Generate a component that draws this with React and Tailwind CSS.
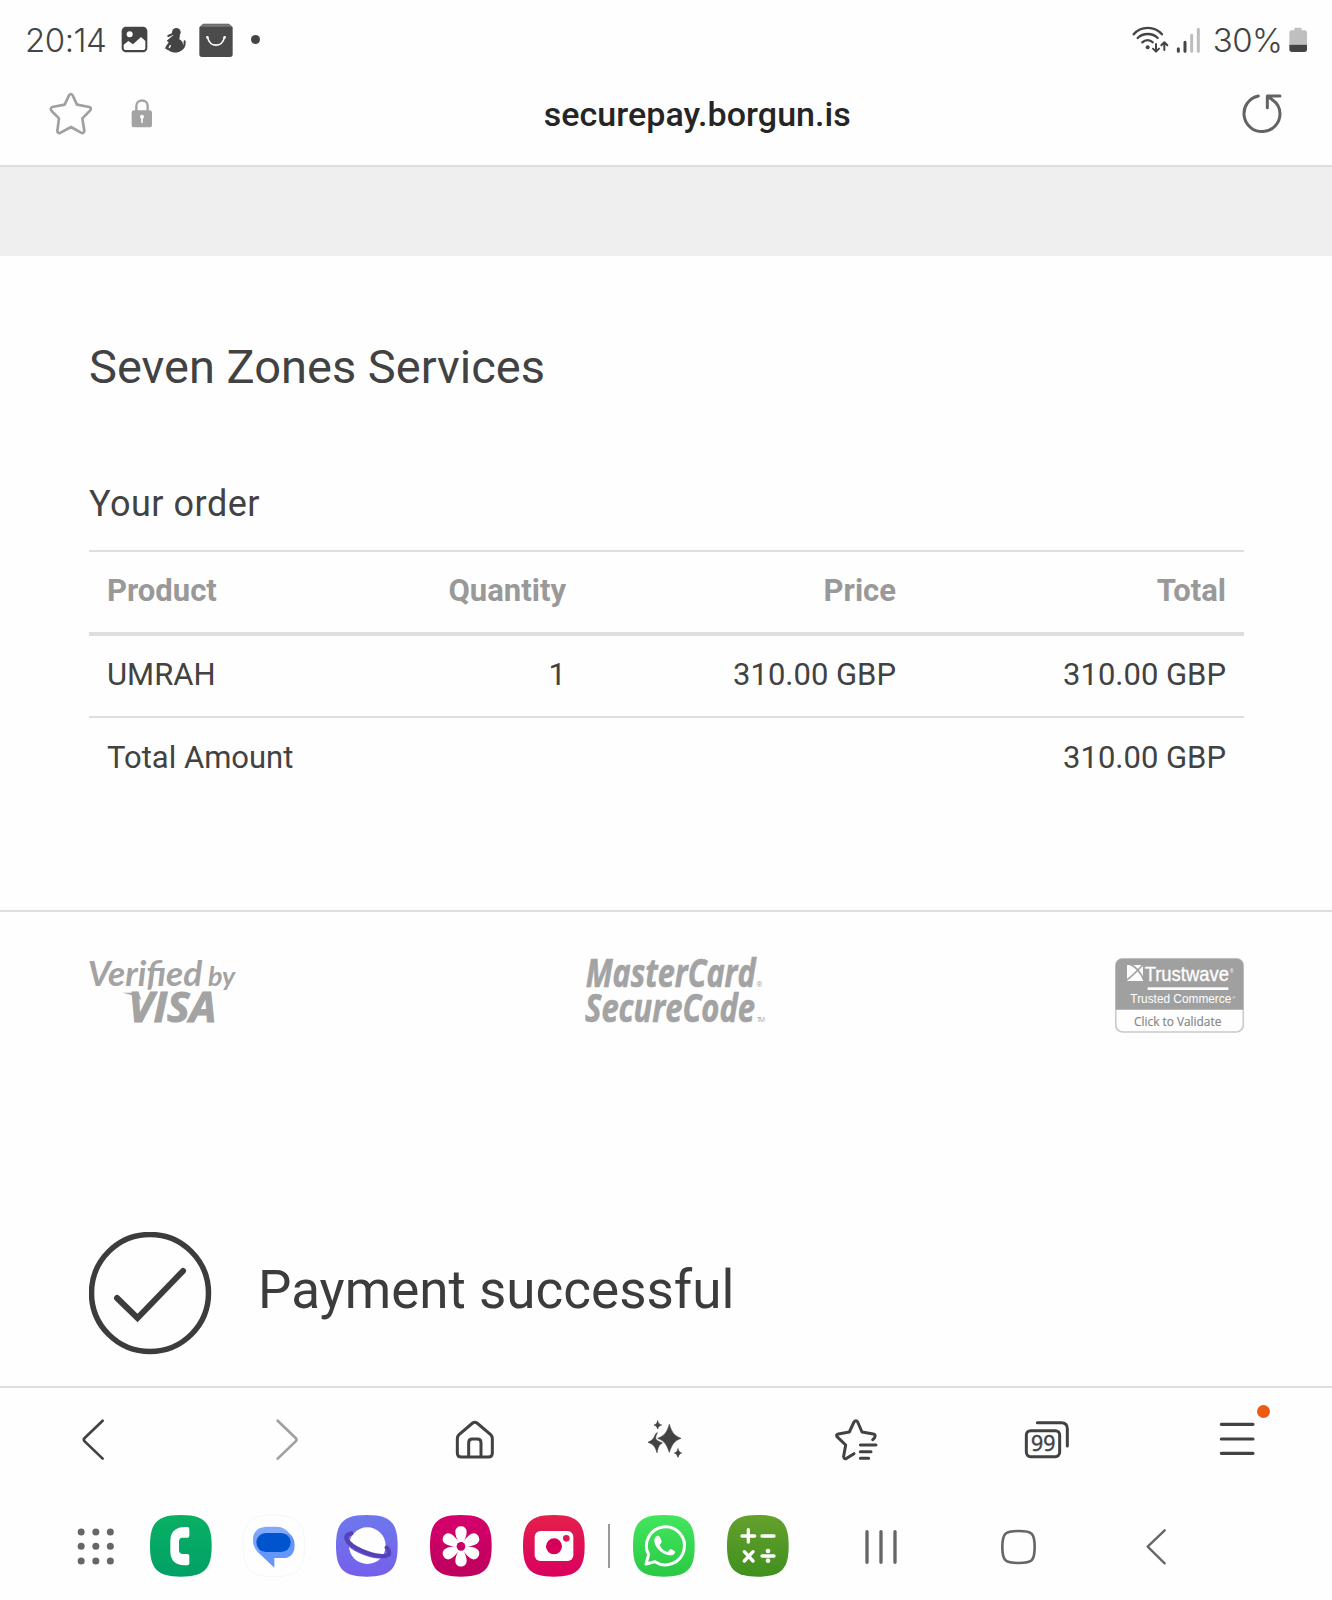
import React from "react";

const SQUIRCLE = "M50 0C88 0 100 12 100 50S88 100 50 100 0 88 0 50 12 0 50 0Z";

function Icon({ box, w, h, className = "", children }) {
  return (
    <svg viewBox={box} width={w} height={h} className={"block shrink-0 " + className} fill="none" strokeLinecap="round" strokeLinejoin="round">
      {children}
    </svg>
  );
}

function AppTile({ id, from, to, stroke, className, children }) {
  return (
    <svg viewBox="0 0 186 186" className={"block h-[62px] w-[62px] shrink-0 overflow-visible " + className} fill="none" strokeLinecap="round" strokeLinejoin="round">
      <defs>
        <linearGradient id={id} x1="0" y1="0" x2="0" y2="1">
          <stop offset="0" stopColor={from} />
          <stop offset="1" stopColor={to} />
        </linearGradient>
      </defs>
      <path d={SQUIRCLE} transform="scale(1.85)" fill={`url(#${id})`} stroke={stroke} />
      {children}
    </svg>
  );
}

function StatusBar() {
  return (
    <div className="flex h-20 items-center text-[#444]">
      <span className="mt-[1px] ml-[25px] w-[81px] whitespace-nowrap font-['Inter'] text-[33px] leading-none font-[350] tracking-[-0.5px]">20:14</span>
      <Icon box="364 79 81 81" w={27} h={27} className="ml-[15px]">
        <rect x="366" y="81" width="77" height="77" rx="13" fill="#444" />
        <circle cx="390" cy="104" r="9" fill="#fefefe" />
        <path d="M372 135L386 124L400 134L424 112L437 124V146Q437 151 432 151H377Q372 151 372 146Z" fill="#fefefe" />
      </Icon>
      <Icon box="490 80 68 80" w={22.67} h={26.67} className="ml-[16px]">
        <circle cx="527" cy="96" r="13" fill="#444" />
        <path d="M516 101L503 107" stroke="#444" strokeWidth="6" />
        <path d="M516 106L538 105L536 117C546 121 550 132 545 145C537 160 511 159 504 150C496 146 492 146 495 139L504 126L498 121Z" fill="#444" />
        <path d="M552 123C553 140 544 151 524 153" stroke="#444" strokeWidth="6" />
        <path d="M509 136L506 142" stroke="#fefefe" strokeWidth="4" />
      </Icon>
      <Icon box="596 69 102 103" w={34} h={34.33} className="ml-[12px]">
        <path d="M597 82L609 71H685L697 82V163Q697 171 689 171H605Q597 171 597 163Z" fill="#4b4b4b" />
        <path d="M607 73H687L696 80H599Z" fill="#777" />
        <path d="M622 113C628 143 666 143 672 113" stroke="#fefefe" strokeWidth="5" />
        <circle cx="621" cy="112" r="4" fill="#fefefe" />
        <circle cx="673" cy="112" r="4" fill="#fefefe" />
      </Icon>
      <span className="ml-[18px] h-[9px] w-[9px] rounded-full bg-[#444]" />
      <Icon box="96 75 111 83" w={37} h={27.67} className="ml-auto">
        <g stroke="#444" strokeWidth="7">
          <path d="M101 100C122 74 164 74 186 100" />
          <path d="M113 111C129 95 158 95 173 111" />
          <path d="M127 124C136 115 150 115 158 124" />
          <path d="M168 129V151M159 143L168 152L177 143M193 147V125M184 133L193 124L202 133" strokeWidth="6" />
        </g>
        <circle cx="143" cy="139" r="6" fill="#444" />
      </Icon>
      <Icon box="228 78 74 80" w={24.67} h={26.67} className="ml-[7px]">
        <g strokeWidth="9">
          <path d="M235 143V151M255 124V151" stroke="#444" />
          <path d="M275 103V151M295 85V151" stroke="#bdbdbd" />
        </g>
      </Icon>
      <span className="mt-[1px] ml-[12px] w-[71px] whitespace-nowrap font-['Inter'] text-[33px] leading-none font-[350] tracking-[-0.5px]">30%</span>
      <Icon box="565 82 55 76" w={18.33} h={25.33} className="mr-[25px] ml-[5px]">
        <path d="M581 92V87Q581 84 584 84H600Q603 84 603 87V92H612Q619 92 619 99V135H566V99Q566 92 573 92Z" fill="#bfbfbf" />
        <path d="M566 135H619V149Q619 157 611 157H574Q566 157 566 149Z" fill="#444" />
      </Icon>
    </div>
  );
}

function AddressBar() {
  return (
    <div className="flex h-[85px] items-start">
      <Icon box="147 276 132 130" w={44} h={43.33} className="mt-[12px] ml-[49px]">
        <path d="M207 286Q213 278 218 286L231 314L268 321Q276 325 270 332L247 355L253 393Q251 402 243 398L213 381L182 398Q173 402 172 393L177 355L155 333Q149 325 157 321L194 314Z" stroke="#a0a0a0" strokeWidth="8" />
      </Icon>
      <Icon box="394 297 65 87" w={21.67} h={29} className="mt-[19px] ml-[38px]">
        <path d="M410 335V318C410 296 444 296 444 318V335" stroke="#a3a3a3" strokeWidth="7" />
        <rect x="396" y="331" width="61" height="51" rx="8" fill="#a3a3a3" />
        <circle cx="427" cy="350" r="6" fill="#fefefe" />
        <path d="M427 352V367" stroke="#fefefe" strokeWidth="5" />
      </Icon>
      <div className="mt-[12px] ml-[391px] w-[312px] font-['Roboto'] text-[34px] leading-[44px] font-medium tracking-[0.05px] whitespace-nowrap text-[#252525]">securepay.borgun.is</div>
      <Icon box="424 280 120 122" w={40} h={40.67} className="mt-[13px] ml-[386px]">
        <path d="M473 289A54 54 0 1 0 538 342C538 324 530 311 516 301L501 290M500 324V289H538" stroke="#636363" strokeWidth="9" />
      </Icon>
    </div>
  );
}

function OrderTable() {
  return (
    <div className="w-[1155px] border-t-2 border-[#dedede] font-['Roboto'] text-[31px] leading-[40px] whitespace-nowrap text-[#424242]">
      <div className="grid h-[84px] grid-cols-[165px_330px_330px_1fr] border-b-[4px] border-[#dedede] pt-[19px] font-bold text-[#999]">
        <div className="pl-[18px]">Product</div>
        <div className="pr-[18px] text-right">Quantity</div>
        <div className="pr-[18px] text-right">Price</div>
        <div className="pr-[18px] text-right">Total</div>
      </div>
      <div className="grid h-[82px] grid-cols-[165px_330px_330px_1fr] border-b-2 border-[#dedede] pt-[19px]">
        <div className="pl-[18px]">UMRAH</div>
        <div className="pr-[18px] text-right">1</div>
        <div className="pr-[18px] text-right">310.00 GBP</div>
        <div className="pr-[18px] text-right">310.00 GBP</div>
      </div>
      <div className="flex h-[80px] justify-between px-[18px] pt-[20px]">
        <div>Total Amount</div>
        <div>310.00 GBP</div>
      </div>
    </div>
  );
}

function TrustLogos() {
  return (
    <div className="flex h-[92px] justify-between pr-[88px] pl-[86px]">
      <svg viewBox="76 76 456 206" className="-mt-[1px] h-[68.67px] w-[152px] overflow-visible" fill="#a3a3a3" fontFamily="Lato, sans-serif">
        <text x="81" y="162" fontSize="104" fontStyle="italic" fontWeight="700" textLength="344" lengthAdjust="spacingAndGlyphs">Verified</text>
        <text x="442" y="162" fontSize="78" fontStyle="italic" fontWeight="700" textLength="82" lengthAdjust="spacingAndGlyphs">by</text>
        <text x="203" y="270" fontFamily="Open Sans, sans-serif" fontSize="122" fontStyle="italic" fontWeight="700" textLength="264" lengthAdjust="spacingAndGlyphs" stroke="#a3a3a3" strokeWidth="3">VISA</text>
        <path d="M186 183H234L242 205C226 194 208 187 186 183Z" />
      </svg>
      <svg viewBox="70 76 552 206" className="-mt-[1px] -ml-[4px] h-[68.67px] w-[184px] overflow-visible" fill="#a3a3a3" fontFamily="Open Sans, sans-serif">
        <text x="78" y="166" fontSize="117" fontStyle="italic" fontWeight="700" stroke="#a3a3a3" strokeWidth="2" textLength="510" lengthAdjust="spacingAndGlyphs">MasterCard</text>
        <text x="76" y="271" fontSize="117" fontStyle="italic" fontWeight="700" stroke="#a3a3a3" strokeWidth="2" textLength="510" lengthAdjust="spacingAndGlyphs">SecureCode</text>
        <text x="590" y="166" fontSize="22">®</text>
        <text x="592" y="270" fontSize="20" textLength="24">TM</text>
      </svg>
      <svg viewBox="75 82 387 225" className="h-[75px] w-[129px]" fontFamily="Liberation Sans, sans-serif">
        <rect x="77" y="84" width="383" height="220" rx="22" fill="#fefefe" stroke="#c9c9c9" strokeWidth="5" />
        <path d="M77 237V106Q77 84 99 84H438Q460 84 460 106V237Z" fill="#a0a0a0" />
        <path d="M111 103H159V151H111Z" fill="#fefefe" />
        <path d="M118 100C138 108 152 126 161 147M160 102C144 116 133 132 110 148" stroke="#a0a0a0" strokeWidth="5" fill="none" />
        <g fill="#fefefe">
          <text x="164" y="150" fontSize="63" stroke="#fefefe" textLength="253" lengthAdjust="spacingAndGlyphs">Trustwave</text>
          <text x="420" y="128" fontSize="14">®</text>
          <rect x="173" y="170" width="242" height="8" />
          <text x="121" y="218" fontSize="38" textLength="303" lengthAdjust="spacingAndGlyphs">Trusted Commerce</text>
          <text x="427" y="206" fontSize="12">®</text>
        </g>
        <text x="132" y="286" fontSize="37" fill="#858585" stroke="#858585" strokeWidth="0.5" fontFamily="Open Sans, sans-serif" textLength="262" lengthAdjust="spacingAndGlyphs">Click to Validate</text>
      </svg>
    </div>
  );
}

function BrowserToolbar() {
  return (
    <div className="flex h-[106px] items-start pt-[30px]">
      <Icon box="62 83 74 130" w={24.67} h={43.33} className="ml-[81px]">
        <path d="M127 91L73 143Q68 148 73 153L127 205" stroke="#424242" strokeWidth="8" />
      </Icon>
      <Icon box="645 83 74 130" w={24.67} h={43.33} className="ml-[169px]">
        <path d="M653 91L707 143Q712 148 707 153L653 205" stroke="#a0a0a0" strokeWidth="8" />
      </Icon>
      <Icon box="1186 83 120 130" w={40} h={43.33} className="ml-[156px]">
        <path d="M1239 98Q1245 93 1252 98L1293 133Q1298 138 1298 145V188Q1298 200 1286 200H1205Q1193 200 1193 188V145Q1193 138 1198 133ZM1227 199V157Q1227 146 1238 146H1253Q1264 146 1264 157V199" stroke="#424242" strokeWidth="9" />
      </Icon>
      <Icon box="440 83 112 130" w={37.33} h={43.33} className="ml-[151px]">
        <g fill="#424242" stroke="#424242" strokeWidth="2">
          <path d="M510 103C519 129 525 136 545 144C525 152 519 160 510 186C501 160 495 152 475 144C495 136 501 129 510 103Z" />
          <path d="M475 92C478 101 480 102 487 104C480 106 478 108 475 116C472 108 470 106 464 104C470 102 472 101 475 92Z" />
          <path d="M536 176C539 184 541 186 547 188C541 190 539 193 536 201C533 193 531 190 525 188C531 186 533 184 536 176Z" />
          <path d="M473 128Q468 138 469 146Q473 152 489 158C479 163 477 169 473 187C467 167 462 162 446 156C459 150 464 144 467 135Q470 127 473 128Z" />
        </g>
      </Icon>
      <Icon box="1001 83 134 130" w={44.67} h={43.33} className="ml-[150px]">
        <path d="M1117 148Q1123 144 1124 139Q1126 132 1119 131L1085 125L1072 95Q1067 87 1061 95L1047 125L1014 131Q1006 133 1010 139L1036 164L1030 198Q1030 208 1039 204L1061 190M1080 164H1127M1080 184H1112M1080 204H1105" stroke="#424242" strokeWidth="9" />
      </Icon>
      <Icon box="612 83 138 130" w={46} h={43.33} className="ml-[145.500px]">
        <rect x="619" y="121" width="100" height="78" rx="13" stroke="#424242" strokeWidth="9" />
        <path d="M652 97H724Q742 97 742 115V167" stroke="#424242" strokeWidth="9" />
        <text x="633" y="182" fill="#424242" stroke="#424242" strokeWidth="1.500" fontFamily="Open Sans, sans-serif" fontSize="64" textLength="73" lengthAdjust="spacingAndGlyphs">99</text>
      </Icon>
      <div className="relative ml-[149px]">
        <Icon box="1196 83 110 130" w={36.67} h={43.33}>
          <path d="M1203 102H1298M1203 146H1298M1203 189H1298" stroke="#424242" strokeWidth="9.500" />
        </Icon>
        <span className="absolute top-[-13px] left-[38px] h-[13px] w-[13px] rounded-full bg-[#ed5b12]" />
      </div>
    </div>
  );
}

const DOTS = [62.5, 106.5, 150];

function Dock() {
  return (
    <div className="flex h-[106px] items-start pt-[21px]">
      <Icon box="50 374 114 186" w={38} h={62} className="ml-[77px]">
        {DOTS.map((x) => [425, 468, 512].map((y) => <circle key={x + "-" + y} cx={x} cy={y} r="10.5" fill="#666" />))}
      </Icon>
      <AppTile id="phone" from="#08b063" to="#02a066" className="ml-[34.5px]">
        <path d="M103 36H112Q118 36 118 42V62Q118 68 112 68H97Q87 69 87 79V106Q87 116 97 117H112Q118 117 118 123V145Q118 151 112 151H103Q62 149 61 110V76Q62 38 103 36Z" fill="#fefefe" />
      </AppTile>
      <AppTile id="messages" from="#fefefe" to="#fefefe" stroke="#f0f0f0" className="ml-[31.5px]">
        <path d="M70 35H102Q126 36 140 56L90 112H45Q30 96 30 74Q31 37 70 35Z" fill="#82a9fb" />
        <path d="M45 112L60 56H140Q155 68 155 92Q153 129 121 129H94V158Z" fill="#6497f8" />
        <path d="M45 112Q30 96 30 74Q31 64 36 55H60L50 112Z" fill="#7aa4fb" />
        <rect x="40" y="54" width="103" height="57" rx="28.500" fill="#0054ce" />
      </AppTile>
      <AppTile id="internet" from="#6d78ec" to="#7560eb" className="ml-[31px]">
        <circle cx="94" cy="92" r="55" fill="#fefefe" />
        <path d="M29 60C24 84 50 104 88 118C126 131 160 132 164 112" stroke="#7069ec" strokeWidth="8" />
        <path d="M46 55C20 60 27 86 78 108C118 125 153 127 159 117Q161 108 152 98" stroke="#5741b7" strokeWidth="13" />
      </AppTile>
      <AppTile id="gallery" from="#d6006c" to="#bd005d" className="ml-[32px]">
        {[0, 60, 120, 180, 240, 300].map((a) => (
          <path key={a} d="M93 96L84 80C80 68 76 61 76 50C76 28 110 28 110 50C110 61 106 68 102 80Z" transform={`rotate(${a} 93 94)`} fill="#fefefe" />
        ))}
        <circle cx="93" cy="94" r="13" fill="#c90065" />
      </AppTile>
      <AppTile id="camera" from="#e4204b" to="#d9005f" className="ml-[31px]">
        <rect x="35" y="48" width="116" height="90" rx="17" fill="#fefefe" />
        <circle cx="93" cy="94" r="24" fill="#d70059" />
        <circle cx="130" cy="70" r="10" fill="#dd1853" />
      </AppTile>
      <span className="mt-[9px] ml-[23px] h-[44px] w-[2px] bg-[#999]" />
      <AppTile id="whatsapp" from="#42e65d" to="#2ac945" className="ml-[23px]">
        <path d="M39 147L47 119A57 57 0 1 1 66 140Z" stroke="#fefefe" strokeWidth="9" />
        <path d="M67 67C72 60 78 61 81 67L86 79Q87 83 80 90C86 102 93 108 104 111Q110 102 114 102L126 109C127 119 118 122 109 121C83 118 61 91 64 73Z" fill="#fefefe" />
      </AppTile>
      <AppTile id="calculator" from="#64a02c" to="#40901f" className="ml-[31.5px]">
        <path d="M45 63H83M64 44V81M105 63H141M52 110L78 138M78 110L52 138M105 123H141" stroke="#fefefe" strokeWidth="10" />
        <circle cx="123" cy="108" r="7" fill="#fefefe" />
        <circle cx="123" cy="137" r="7" fill="#fefefe" />
      </AppTile>
      <Icon box="132 374 102 186" w={34} h={62} className="ml-[75px]">
        <path d="M141 424V516M183 424V516M225 424V516" stroke="#666" strokeWidth="10" />
      </Icon>
      <Icon box="540 374 112 186" w={37.33} h={62} className="ml-[102px]">
        <path d="M596 422C637 422 644 429 644 470S637 518 596 518 547 511 547 470 555 422 596 422Z" stroke="#666" strokeWidth="8" />
      </Icon>
      <Icon box="976 374 66 186" w={22} h={62} className="ml-[108px]">
        <path d="M1035 420L984 469L1035 519" stroke="#666" strokeWidth="7" />
      </Icon>
    </div>
  );
}

export default function App() {
  return (
    <div className="flex h-[1600px] w-[1332px] flex-col overflow-hidden bg-[#fefefe]">
      <StatusBar />
      <AddressBar />
      <div className="h-[91px] border-t-2 border-[#dedede] bg-[#efefef]" />
      <main className="flex h-[655px] flex-col pl-[89px] text-[#424242]">
        <h1 className="mt-[81px] h-[60px] font-['Roboto'] text-[47px] leading-[60px] whitespace-nowrap">Seven Zones Services</h1>
        <h2 className="mt-[82px] h-[50px] font-['Roboto'] text-[36px] leading-[50px] tracking-[0.5px] whitespace-nowrap">Your order</h2>
        <div className="mt-[21px]">
          <OrderTable />
        </div>
      </main>
      <div className="h-[321px] border-t-2 border-[#dedede] pt-[46px]">
        <TrustLogos />
      </div>
      <div className="flex h-[156px] items-start pl-[89px]">
        <Icon box="0 0 123 123" w={123} h={123} className="mt-[1px]">
          <circle cx="61" cy="61" r="58.5" stroke="#3c3c3c" strokeWidth="5.500" />
          <path d="M28 66L48.500 86L94 39" stroke="#3c3c3c" strokeWidth="6" strokeLinejoin="miter" />
        </Icon>
        <p className="mt-[23px] ml-[46px] font-['Roboto'] text-[53px] leading-[72px] whitespace-nowrap text-[#3c3c3c]">Payment successful</p>
      </div>
      <div className="-mt-px border-t-2 border-[#dedede]">
        <BrowserToolbar />
        <Dock />
      </div>
    </div>
  );
}
